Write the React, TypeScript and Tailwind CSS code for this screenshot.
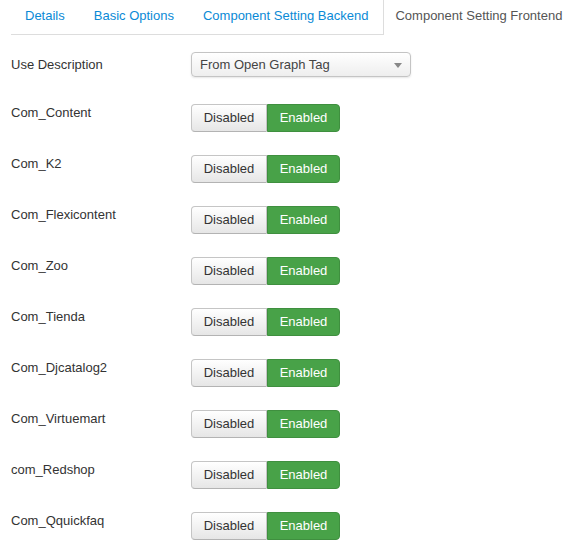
import React from "react";

const rows = [
  "Com_Content",
  "Com_K2",
  "Com_Flexicontent",
  "Com_Zoo",
  "Com_Tienda",
  "Com_Djcatalog2",
  "Com_Virtuemart",
  "com_Redshop",
  "Com_Qquickfaq",
];

function Toggle() {
  return (
    <div className="flex h-[28px] text-[13px]">
      <div className="flex items-center justify-center w-[76px] rounded-l-[4px] border border-[#c5c5c5] border-b-[#b3b3b3] bg-gradient-to-b from-white to-[#e6e6e6] text-[#333]">
        Disabled
      </div>
      <div className="flex items-center justify-center w-[73px] rounded-r-[4px] border border-[#3f8f3f] bg-[#48a248] text-white">
        Enabled
      </div>
    </div>
  );
}

export default function App() {
  return (
    <div
      className="w-[570px] h-[558px] bg-white overflow-hidden text-[13px] text-[#333]"
      style={{ fontFamily: '"Liberation Sans", Arial, sans-serif' }}
    >
      <div className="flex h-[35px] pl-[11px] whitespace-nowrap leading-[18px]">
        <div className="flex shrink-0 border-b border-[#ddd]">
          <div className="pt-[7px] pl-[14px] pr-[14px] mr-[1px] text-[#0a8ad6]">Details</div>
          <div className="pt-[7px] px-[14px] mr-[1px] text-[#0a8ad6]">Basic Options</div>
          <div className="pt-[7px] pl-[14px] pr-[15px] text-[#0a8ad6]">Component Setting Backend</div>
        </div>
        <div className="flex-1 shrink-0 border-l border-[#ddd] pt-[7px] pl-[11px] text-[#555]">
          Component Setting Frontend
        </div>
      </div>
      <div className="pl-[11px] pt-[17px]">
        <div className="flex items-center h-[25px]">
          <div className="w-[180px] leading-[18px] mt-[1px]">Use Description</div>
          <div className="relative flex items-center w-[220px] h-[25px] rounded-[4px] border border-[#c4c4c4] bg-gradient-to-b from-white to-[#eeeeee] pl-[8px] text-[#444] shadow-[0_1px_2px_rgba(0,0,0,0.1)]">
            From Open Graph Tag
            <span className="absolute right-[8px] top-[10px] w-0 h-0 border-l-[4px] border-r-[4px] border-t-[5px] border-l-transparent border-r-transparent border-t-[#888]" />
          </div>
        </div>
        <div className="flex flex-col gap-[23px] mt-[27px]">
          {rows.map((r) => (
            <div key={r} className="flex items-start">
              <div className="w-[180px] leading-[18px]">{r}</div>
              <Toggle />
            </div>
          ))}
        </div>
      </div>
    </div>
  );
}
